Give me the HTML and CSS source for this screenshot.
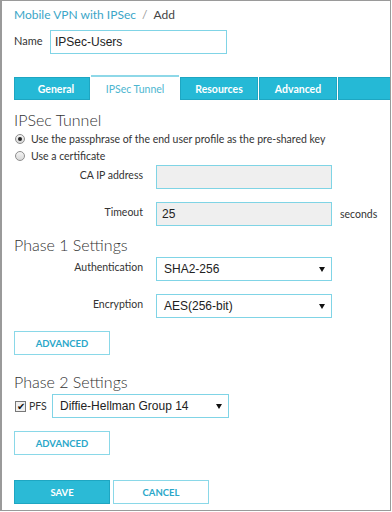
FILE: index.html
```html
<!DOCTYPE html>
<html lang="en">
  <head>
    <meta charset="UTF-8" />
    <title>Mobile VPN with IPSec - Add</title>
    <link rel="stylesheet" href="styles.css">
  </head>
  <body>
    <div class="frame">
      <div class="breadcrumb">
        <a href="#" class="crumb-link">Mobile VPN with IPSec</a>
        <span class="crumb-sep">/</span>
        <span class="crumb-current">Add</span>
      </div>

      <div class="name-row">
        <label class="name-label">Name</label>
        <div class="field name-field">IPSec-Users</div>
      </div>

      <div class="tabs">
        <div class="tab">General</div>
        <div class="tab active">IPSec Tunnel</div>
        <div class="tab">Resources</div>
        <div class="tab">Advanced</div>
        <div class="tab blank"></div>
      </div>

      <h2 class="section-title first">IPSec Tunnel</h2>
      <div class="radio-row">
        <span class="radio checked"></span>
        <span>Use the passphrase of the end user profile as the pre-shared key</span>
      </div>
      <div class="radio-row">
        <span class="radio"></span>
        <span>Use a certificate</span>
      </div>

      <div class="form-row after-radios">
        <label class="form-label">CA IP address</label>
        <div class="field disabled"></div>
      </div>
      <div class="form-row">
        <label class="form-label">Timeout</label>
        <div class="field disabled">25</div>
        <span class="unit">seconds</span>
      </div>

      <h2 class="section-title">Phase 1 Settings</h2>
      <div class="form-row after-title">
        <label class="form-label">Authentication</label>
        <div class="field select">SHA2-256<span class="caret"></span></div>
      </div>
      <div class="form-row">
        <label class="form-label">Encryption</label>
        <div class="field select">AES(256-bit)<span class="caret"></span></div>
      </div>
      <button class="btn btn-outline">ADVANCED</button>

      <h2 class="section-title phase2">Phase 2 Settings</h2>
      <div class="pfs-row">
        <span class="checkbox">&#10004;</span>
        <span class="pfs-label">PFS</span>
        <div class="field select pfs-select">Diffie-Hellman Group 14<span class="caret"></span></div>
      </div>
      <button class="btn btn-outline">ADVANCED</button>

      <div class="actions">
        <button class="btn btn-primary">SAVE</button>
        <button class="btn btn-outline">CANCEL</button>
      </div>
    </div>
  </body>
</html>
```

FILE: styles.css
```css
body {
  margin: 0;
  background: #ffffff;
  font-family: Lato, "Open Sans", sans-serif;
  color: #444;
}

.frame {
  box-sizing: border-box;
  width: 391px;
  height: 511px;
  border: 1px solid #9a9a9a;
  border-left-width: 2px;
  padding: 0 0 0 12px;
  overflow: hidden;
}

.breadcrumb {
  font-size: 12px;
  line-height: 14px;
  padding-top: 7px;
  display: flex;
  gap: 6px;
}

.crumb-link {
  color: #3aa6c8;
  text-decoration: none;
}

.crumb-sep {
  color: #999;
}

.crumb-current {
  color: #444;
}

.name-row {
  display: flex;
  align-items: center;
  margin-top: 8px;
  gap: 9px;
}

.name-label {
  font-size: 11px;
  color: #333;
  width: 27px;
  padding-bottom: 4px;
}

.field {
  box-sizing: border-box;
  height: 24px;
  width: 176px;
  border: 1px solid #80d4e6;
  font-family: "Liberation Sans", Arial, sans-serif;
  font-size: 12px;
  color: #222;
  display: flex;
  align-items: center;
  padding-left: 8px;
  position: relative;
  background: #fff;
}

.name-field {
  width: 177px;
  height: 24px;
  padding-left: 4px;
}

.tabs {
  display: flex;
  margin-top: 21px;
  gap: 1px;
  margin-right: -20px;
  align-items: flex-end;
}

.tab {
  box-sizing: border-box;
  height: 23px;
  background: #25b9d6;
  border: 1px solid #1ea6c2;
  color: #fff;
  font-weight: 700;
  font-size: 10.5px;
  display: flex;
  align-items: center;
  justify-content: center;
  width: 76px;
}

.tab:nth-child(1) {
  width: 76px;
  padding-left: 8px;
}

.tab:nth-child(3) { width: 78px; }
.tab:nth-child(4) { width: 78px; }

.tab.active {
  width: 88px;
  height: 25px;
  background: #fff;
  color: #4db6d0;
  font-weight: 400;
  border: none;
  border-top: 2px solid #8ed8e8;
}

.tab.blank {
  flex: 1;
}

.section-title {
  font-size: 16px;
  font-weight: 300;
  color: #333;
  margin: 9px 0 0;
  line-height: 20px;
}

.section-title.first {
  margin-top: 10px;
}

.section-title.phase2 {
  margin-top: 17px;
}

.radio-row {
  display: flex;
  align-items: center;
  gap: 6px;
  font-size: 10.5px;
  color: #333;
  height: 17px;
}

.radio {
  box-sizing: border-box;
  width: 10px;
  height: 10px;
  border-radius: 50%;
  border: 1px solid #8e8e8e;
  background: linear-gradient(#f4f4f4, #d8d8d8);
  position: relative;
  margin-left: 1px;
}

.radio.checked::after {
  content: "";
  position: absolute;
  left: 2px;
  top: 2px;
  width: 4px;
  height: 4px;
  border-radius: 50%;
  background: #222;
}

.form-row {
  display: flex;
  align-items: center;
  margin-top: 13px;
}

.form-row.after-radios {
  margin-top: 1px;
}

.form-row.after-title {
  margin-top: 2px;
}

.form-label {
  box-sizing: border-box;
  width: 142px;
  padding-right: 13px;
  text-align: right;
  font-size: 10.5px;
  color: #333;
  padding-bottom: 5px;
}

.field.disabled {
  background: #efefef;
  border-color: #7fd4e5;
  padding-left: 5px;
}

.unit {
  font-size: 10.5px;
  color: #333;
  margin-left: 8px;
}

.field.select {
  padding-left: 7px;
}

.caret {
  position: absolute;
  right: 6px;
  top: 9px;
  width: 0;
  height: 0;
  border-left: 3px solid transparent;
  border-right: 3px solid transparent;
  border-top: 5px solid #111;
}

.btn {
  box-sizing: border-box;
  width: 96px;
  height: 24px;
  font-family: Lato, "Open Sans", sans-serif;
  font-size: 9.5px;
  font-weight: 700;
  cursor: pointer;
  padding: 0;
}

.btn-outline {
  background: #fff;
  color: #2aa7c9;
  border: 1px solid #8ad8e8;
}

.btn-primary {
  background: #2bbad6;
  color: #fff;
  border: 1px solid #1ea6c2;
}

.frame > .btn-outline {
  display: block;
  margin-top: 13px;
}

.pfs-row {
  display: flex;
  align-items: center;
  margin-top: 2px;
}

.checkbox {
  box-sizing: border-box;
  width: 11px;
  height: 11px;
  border: 1px solid #777;
  background: #f0f0f0;
  font-size: 10px;
  line-height: 8px;
  color: #111;
  display: flex;
  align-items: center;
  justify-content: center;
  margin-left: 1px;
}

.pfs-label {
  font-size: 10.5px;
  color: #333;
  margin-left: 3px;
  width: 23px;
}

.pfs-select {
  width: 177px;
  padding-left: 9px;
}

.actions {
  display: flex;
  gap: 3px;
  margin-top: 25px;
}
```
